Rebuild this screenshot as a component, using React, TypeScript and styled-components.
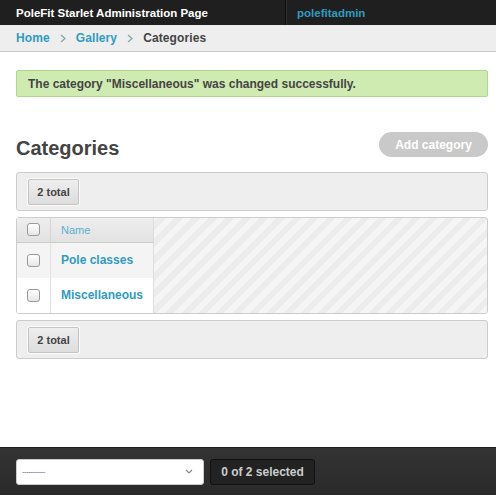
import React from "react";
import styled, { createGlobalStyle } from "styled-components";

const Global = createGlobalStyle`
  html, body { margin: 0; padding: 0; background: #fff; }
  body { font-family: "Liberation Sans", Arial, sans-serif; color: #444; }
  #root { min-height: 100vh; display: flex; flex-direction: column; }
`;

const Page = styled.div`
  flex: 1;
  display: flex;
  flex-direction: column;
  min-height: 495px;
`;

const Header = styled.header`
  height: 25px;
  background: #1f1f1f;
  display: flex;
  align-items: stretch;
  font-size: 11.5px;
  font-weight: bold;
`;

const Brand = styled.div`
  width: 269px;
  padding-left: 16px;
  display: flex;
  align-items: center;
  color: #fff;
  border-right: 1px solid #0c0c0c;
  box-shadow: 1px 0 0 #333;
`;

const User = styled.div`
  padding-left: 11px;
  display: flex;
  align-items: center;
  color: #309bbf;
`;

const Crumbs = styled.nav`
  height: 26px;
  background: #eee;
  border-bottom: 1px solid #ccc;
  display: flex;
  align-items: center;
  padding-left: 16px;
  gap: 10px;
  font-size: 12px;
  font-weight: bold;
  letter-spacing: 0.1px;
`;

const CrumbLink = styled.a<{ $current?: boolean }>`
  color: ${(p) => (p.$current ? "#444" : "#309bbf")};
  text-decoration: none;
`;

const Chevron = () => (
  <svg width="6" height="9" viewBox="0 0 6 9">
    <path d="M1 1 L5 4.5 L1 8" fill="none" stroke="#8aa" strokeWidth="1.4" />
  </svg>
);

const Content = styled.main`
  padding: 18px 8px 0 16px;
  display: flex;
  flex-direction: column;
`;

const Message = styled.div`
  height: 25px;
  background: #d0ebb2;
  border: 1px solid #afd98a;
  border-radius: 2px;
  display: flex;
  align-items: center;
  padding-left: 11px;
  font-size: 12px;
  font-weight: bold;
  color: #444;
`;

const TitleRow = styled.div`
  margin-top: 35px;
  display: flex;
  justify-content: space-between;
  align-items: flex-end;
  height: 25px;
`;

const Title = styled.h1`
  margin: 0 0 -3px 0;
  font-size: 20px;
  font-weight: bold;
  color: #444;
  line-height: 24px;
`;

const AddButton = styled.a`
  height: 25px;
  width: 109px;
  box-sizing: border-box;
  border-radius: 13px;
  background: #c9c9c9;
  color: #fff;
  font-size: 12px;
  font-weight: bold;
  display: flex;
  align-items: center;
  justify-content: center;
`;

const Toolbar = styled.div<{ $mt: number }>`
  margin-top: ${(p) => p.$mt}px;
  height: 37px;
  background: #eee;
  border: 1px solid #ccc;
  border-radius: 3px;
  display: flex;
  align-items: center;
  padding-left: 11px;
`;

const TotalButton = styled.span`
  height: 26px;
  width: 51px;
  box-sizing: border-box;
  border: 1px solid #c4c4c4;
  box-shadow: 0 0 0 1px #fafafa;
  border-radius: 2px;
  background: linear-gradient(#eee, #ddd);
  font-size: 11px;
  font-weight: bold;
  color: #444;
  display: flex;
  align-items: center;
  justify-content: center;
`;

const TableWrap = styled.div`
  margin-top: 6px;
  height: 95px;
  border: 1px solid #ccc;
  border-radius: 3px;
  overflow: hidden;
  display: flex;
  background: repeating-linear-gradient(
    -45deg,
    #f5f5f5 0px,
    #f5f5f5 6px,
    #ececec 6px,
    #ececec 12px
  );
`;

const Table = styled.table`
  border-collapse: collapse;
  background: #fff;
  border-right: 1px solid #ddd;
  height: 100%;
`;

const HeadCell = styled.th<{ $w?: number }>`
  width: ${(p) => (p.$w ? `${p.$w}px` : "auto")};
  height: 24px;
  box-sizing: border-box;
  background: linear-gradient(#eee, #e2e2e2);
  border-bottom: 1px solid #ccc;
  border-right: 1px solid #d4d4d4;
  text-align: left;
  padding: 0 0 0 10px;
  font-size: 11px;
  font-weight: normal;
  color: #59afcc;
  &:last-child { border-right: none; }
`;

const Row = styled.tr<{ $alt?: boolean }>`
  background: ${(p) => (p.$alt ? "#f4f4f4" : "#fff")};
  & + & td { border-top: 1px solid #e0e0e0; }
`;

const Cell = styled.td<{ $w?: number }>`
  width: ${(p) => (p.$w ? `${p.$w}px` : "auto")};
  height: 35px;
  padding: 0 10px;
  border-right: 1px solid #e0e0e0;
  font-size: 12px;
  font-weight: bold;
  color: #309bbf;
  &:last-child { border-right: none; }
`;

const Check = styled.span`
  display: block;
  width: 11px;
  height: 11px;
  border: 1px solid #999;
  border-radius: 3px;
  background: linear-gradient(#fff, #e6e6e6);
  box-shadow: inset 0 1px 1px rgba(255,255,255,0.8);
`;

const Footer = styled.footer`
  margin-top: auto;
  height: 47px;
  background: linear-gradient(#333, #2a2a2a);
  border-top: 1px solid #1e1e1e;
  display: flex;
  align-items: center;
  padding-left: 16px;
  gap: 6px;
`;

const Select = styled.div`
  width: 188px;
  height: 26px;
  box-sizing: border-box;
  background: #fff;
  border-radius: 3px;
  border: 1px solid #ccc;
  display: flex;
  align-items: center;
  justify-content: space-between;
  padding: 0 10px 0 5px;
  font-family: "Liberation Sans", Arial, sans-serif;
  font-size: 8px;
  color: #6a5a7a;
  letter-spacing: -0.6px;
`;

const Selected = styled.div`
  height: 26px;
  width: 105px;
  box-sizing: border-box;
  background: #222;
  border: 1px solid #111;
  border-radius: 3px;
  display: flex;
  align-items: center;
  justify-content: center;
  color: #ccc;
  font-size: 12px;
  font-weight: bold;
`;

export default function App() {
  return (
    <>
      <Global />
      <Page>
        <Header>
          <Brand>PoleFit Starlet Administration Page</Brand>
          <User>polefitadmin</User>
        </Header>
        <Crumbs>
          <CrumbLink>Home</CrumbLink>
          <Chevron />
          <CrumbLink>Gallery</CrumbLink>
          <Chevron />
          <CrumbLink $current>Categories</CrumbLink>
        </Crumbs>
        <Content>
          <Message>The category "Miscellaneous" was changed successfully.</Message>
          <TitleRow>
            <Title>Categories</Title>
            <AddButton>Add category</AddButton>
          </TitleRow>
          <Toolbar $mt={15}>
            <TotalButton>2 total</TotalButton>
          </Toolbar>
          <TableWrap>
            <Table>
              <thead>
                <tr>
                  <HeadCell $w={32}><Check /></HeadCell>
                  <HeadCell $w={103}>Name</HeadCell>
                </tr>
              </thead>
              <tbody>
                <Row $alt>
                  <Cell $w={12}><Check /></Cell>
                  <Cell>Pole classes</Cell>
                </Row>
                <Row>
                  <Cell $w={12}><Check /></Cell>
                  <Cell>Miscellaneous</Cell>
                </Row>
              </tbody>
            </Table>
          </TableWrap>
          <Toolbar $mt={6}>
            <TotalButton>2 total</TotalButton>
          </Toolbar>
        </Content>
        <Footer>
          <Select>
            <span>-----------</span>
            <svg width="8" height="5" viewBox="0 0 8 5">
              <path d="M1 1 L4 4 L7 1" fill="none" stroke="#888" strokeWidth="1.2" />
            </svg>
          </Select>
          <Selected>0 of 2 selected</Selected>
        </Footer>
      </Page>
    </>
  );
}
